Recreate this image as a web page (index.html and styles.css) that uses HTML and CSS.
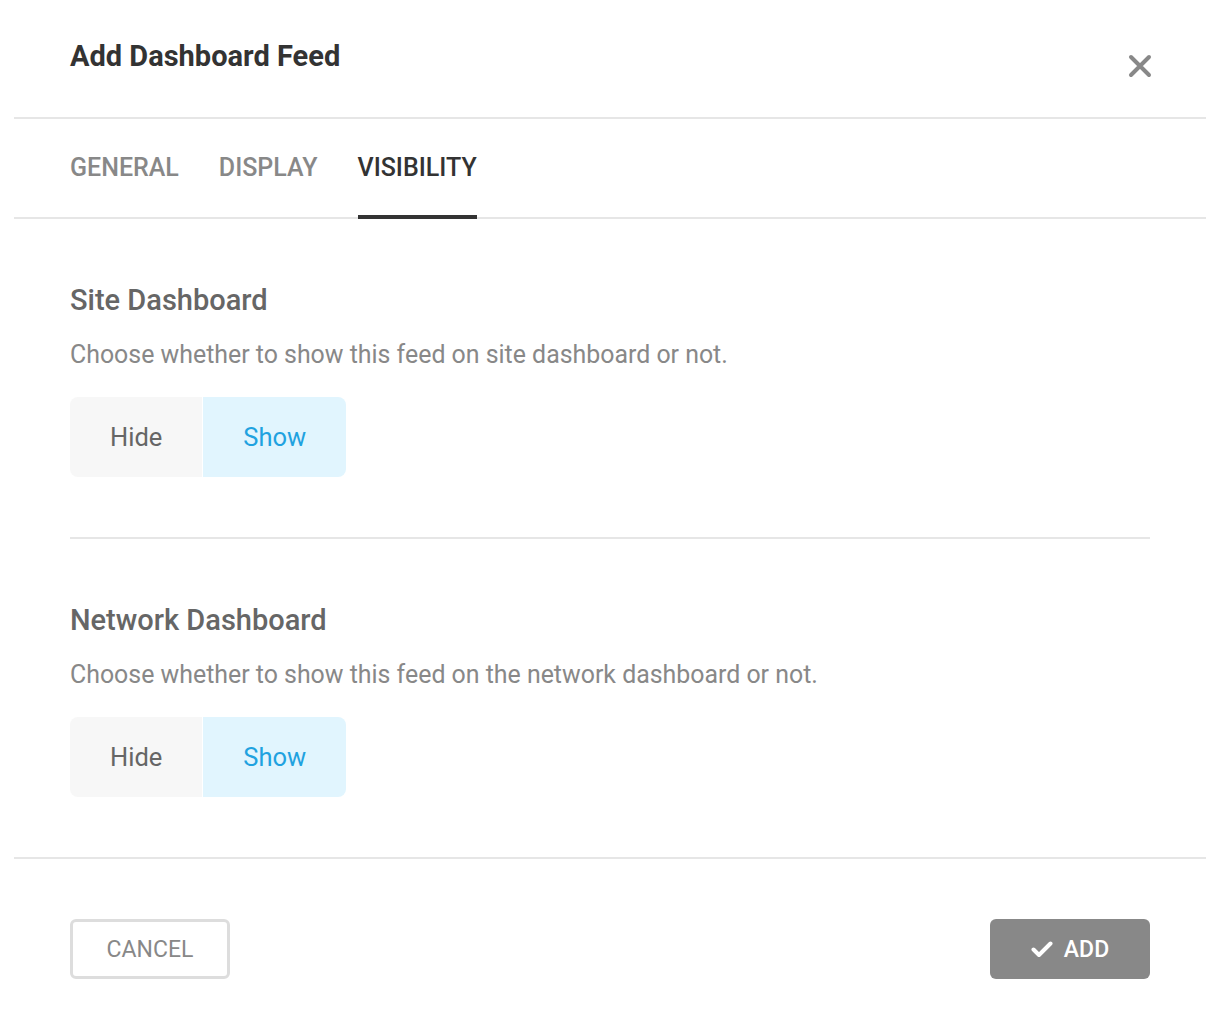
FILE: index.html
```html
<!DOCTYPE html>
<html lang="en">
<head>
<meta charset="utf-8">
<title>Add Dashboard Feed</title>
<link rel="stylesheet" href="styles.css">
</head>
<body>
<div class="modal">
  <div class="modal-header">
    <h1 class="modal-title">Add Dashboard Feed</h1>
    <button class="close-btn" aria-label="Close">
      <svg width="24" height="24" viewBox="0 0 24 24"><path d="M3 3 L21 21 M21 3 L3 21" stroke="#888" stroke-width="4" stroke-linecap="round" fill="none"/></svg>
    </button>
  </div>
  <div class="tabs">
    <div class="tab">GENERAL</div>
    <div class="tab">DISPLAY</div>
    <div class="tab active">VISIBILITY</div>
  </div>
  <div class="modal-body">
    <div class="section">
      <h2 class="section-title">Site Dashboard</h2>
      <p class="section-desc">Choose whether to show this feed on site dashboard or not.</p>
      <div class="toggle">
        <div class="toggle-opt">Hide</div>
        <div class="toggle-opt selected">Show</div>
      </div>
    </div>
    <div class="section">
      <h2 class="section-title">Network Dashboard</h2>
      <p class="section-desc">Choose whether to show this feed on the network dashboard or not.</p>
      <div class="toggle">
        <div class="toggle-opt">Hide</div>
        <div class="toggle-opt selected">Show</div>
      </div>
    </div>
  </div>
  <div class="modal-footer">
    <button class="btn btn-cancel">CANCEL</button>
    <button class="btn btn-add">
      <svg width="22" height="18" viewBox="0 0 22 18"><path d="M2.5 9.5 L8 15 L19.5 3.5" stroke="#fff" stroke-width="4" fill="none" stroke-linecap="round" stroke-linejoin="round"/></svg>
      <span>ADD</span>
    </button>
  </div>
</div>
</body>
</html>
```

FILE: styles.css
```css
* { box-sizing: border-box; }
html, body {
  margin: 0;
  padding: 0;
  background: #fff;
  font-family: Roboto, "Liberation Sans", Arial, sans-serif;
}
.modal {
  margin: 0 14px;
}
.modal-header {
  height: 119px;
  border-bottom: 2px solid #e6e6e6;
  padding: 38px 56px 0;
  display: flex;
  justify-content: space-between;
  align-items: flex-start;
}
.modal-title {
  margin: 0;
  font-size: 29px;
  line-height: 36px;
  font-weight: 700;
  color: #333;
}
.close-btn {
  margin-top: 16px;
  margin-right: -2px;
  padding: 0;
  border: 0;
  background: none;
  width: 24px;
  height: 24px;
  display: flex;
}
.tabs {
  height: 100px;
  border-bottom: 2px solid #e6e6e6;
  padding: 0 56px;
  display: flex;
  gap: 40px;
}
.tab {
  height: 100px;
  margin-bottom: -2px;
  border-bottom: 4px solid transparent;
  display: flex;
  align-items: center;
  padding-top: 2px;
  font-size: 25px;
  line-height: 26px;
  font-weight: 500;
  color: #888;
}
.tab.active {
  color: #333;
  border-bottom-color: #333;
}
.modal-body {
  padding: 0 56px;
}
.section {
  padding: 65px 0 60px;
}
.section + .section {
  border-top: 2px solid #e6e6e6;
}
.section-title {
  margin: 0;
  font-size: 29px;
  line-height: 32px;
  font-weight: 500;
  color: #666;
}
.section-desc {
  margin: 23px 0 0;
  font-size: 24.9px;
  line-height: 32px;
  color: #888;
}
.toggle {
  margin-top: 26px;
  display: flex;
  gap: 1px;
}
.toggle-opt {
  height: 80px;
  padding: 0 40px;
  display: flex;
  align-items: center;
  font-size: 25.5px;
  color: #666;
  background: #f7f7f7;
}
.toggle-opt:first-child { border-radius: 8px 0 0 8px; }
.toggle-opt:last-child { border-radius: 0 8px 8px 0; }
.toggle-opt.selected {
  background: #e1f5fe;
  color: #1fa2e0;
}
.modal-footer {
  border-top: 2px solid #e6e6e6;
  padding: 60px 56px 0;
  display: flex;
  justify-content: space-between;
}
.btn {
  width: 160px;
  height: 60px;
  border-radius: 6px;
  font-family: Roboto, "Liberation Sans", Arial, sans-serif;
  font-size: 23px;
  display: flex;
  align-items: center;
  justify-content: center;
  padding: 0;
  cursor: pointer;
}
.btn-cancel {
  background: #fff;
  border: 3px solid #ddd;
  color: #888;
}
.btn-add {
  background: #888;
  border: 0;
  color: #fff;
  font-weight: 500;
  gap: 11px;
}
```
